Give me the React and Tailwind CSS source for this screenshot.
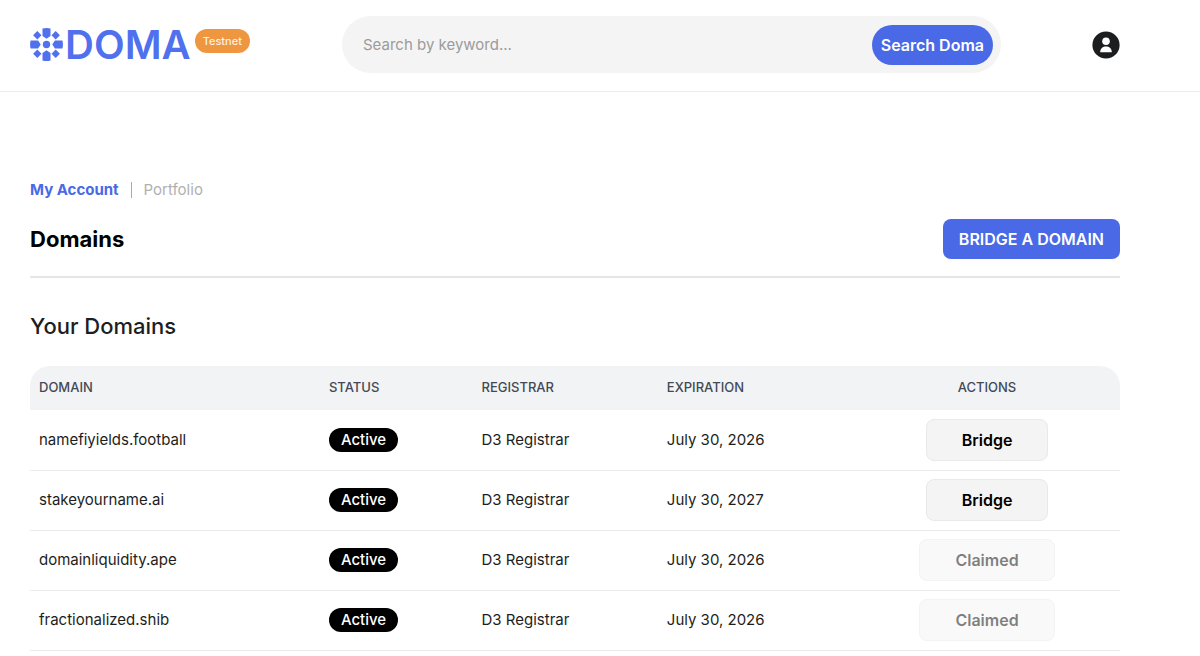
import { useState } from "react";

const domains = [
  { name: "namefiyields.football", registrar: "D3 Registrar", expiration: "July 30, 2026", claimed: false },
  { name: "stakeyourname.ai", registrar: "D3 Registrar", expiration: "July 30, 2027", claimed: false },
  { name: "domainliquidity.ape", registrar: "D3 Registrar", expiration: "July 30, 2026", claimed: true },
  { name: "fractionalized.shib", registrar: "D3 Registrar", expiration: "July 30, 2026", claimed: true },
];

function LogoMark() {
  return (
    <svg viewBox="0.5 0.5 33 33" className="w-[33px] h-[33px] shrink-0" fill="currentColor" aria-hidden="true">
      <circle cx="17" cy="17" r="3.7" />
      {[0, 90, 180, 270].map((angle) => (
        <g key={angle} transform={`rotate(${angle} 17 17)`}>
          {/* straight petal */}
          <path d="M13 1.1Q17 0.1 21 1.1V8.6L17 11.2L13 8.6Z" />
          {/* diagonal petal */}
          <path d="M26.2 3.6L30.4 7.8L26.2 12L22 7.8Z" />
        </g>
      ))}
    </svg>
  );
}

function AccountIcon() {
  return (
    <svg viewBox="0 0 28 28" className="w-7 h-7" aria-hidden="true">
      <circle cx="14" cy="14" r="13.6" fill="#1b1d1f" />
      <circle cx="14" cy="10.2" r="3.8" fill="#fff" />
      <path d="M8.2 21.2C8.2 17.4 10.8 15.4 14 15.4S19.8 17.4 19.8 21.2Z" fill="#fff" />
    </svg>
  );
}

function Header() {
  const [keyword, setKeyword] = useState("");

  return (
    <header className="flex items-center pt-4 pb-[18px] pl-[30px] pr-20 border-b border-[#ececec]">
      <div className="w-[312px] shrink-0 flex items-center">
        <a href="#" className="flex items-center gap-[2px] text-[#5170ee]">
          <LogoMark />
          <span className="text-[40px] leading-10 font-semibold">DOMA</span>
        </a>
        <span className="ml-1 mb-2 px-2 py-1 rounded-full bg-[#ef9640] text-[#fdf0e0] text-[11px] leading-4 font-medium">
          Testnet
        </span>
      </div>

      <form
        onSubmit={(e) => e.preventDefault()}
        className="flex-1 min-w-0 h-[57px] flex items-center rounded-full bg-[#f4f4f4] pl-[21px] pr-2"
      >
        <input
          type="text"
          aria-label="Search by keyword"
          placeholder="Search by keyword..."
          className="flex-1 min-w-0 h-10 bg-transparent text-[15px] outline-none placeholder:text-[#9b9b9b]"
          value={keyword}
          onChange={(e) => setKeyword(e.target.value)}
        />
        <button type="submit" className="h-10 px-[9px] rounded-full bg-[#4969e6] text-white text-base font-semibold">
          Search Doma
        </button>
      </form>

      <button type="button" aria-label="Account" className="ml-[91px] shrink-0">
        <AccountIcon />
      </button>
    </header>
  );
}

function DomainsTable() {
  return (
    <table className="w-full table-fixed text-left text-[15px] text-[#1c1e21]">
      <thead className="text-[13px] text-[#434955]">
        <tr className="h-11">
          <th className="w-[26.6%] px-[9px] font-medium bg-[#f2f3f5] rounded-tl-[20px]">DOMAIN</th>
          <th className="w-[14%] px-[9px] font-medium bg-[#f2f3f5]">STATUS</th>
          <th className="w-[17%] px-[9px] font-medium bg-[#f2f3f5]">REGISTRAR</th>
          <th className="w-[18%] px-[9px] font-medium bg-[#f2f3f5]">EXPIRATION</th>
          <th className="px-[9px] font-medium bg-[#f2f3f5] rounded-tr-[20px] text-center">ACTIONS</th>
        </tr>
      </thead>
      <tbody>
        {domains.map((domain) => (
          <tr key={domain.name} className="h-[60px] border-b border-[#ececec]">
            <td className="px-[9px]">{domain.name}</td>
            <td className="px-[9px]">
              <span className="inline-block px-3 rounded-full bg-black text-white leading-6 font-medium">Active</span>
            </td>
            <td className="px-[9px]">{domain.registrar}</td>
            <td className="px-[9px]">{domain.expiration}</td>
            <td className="px-[9px] text-center">
              <button
                type="button"
                disabled={domain.claimed}
                className="h-[42px] px-[35px] rounded-lg border border-[#e9e9e9] bg-[#f4f4f4] text-black text-base font-semibold disabled:opacity-50"
              >
                {domain.claimed ? "Claimed" : "Bridge"}
              </button>
            </td>
          </tr>
        ))}
      </tbody>
    </table>
  );
}

export default function App() {
  return (
    <div className="bg-white font-['Inter',sans-serif]">
      <Header />
      <main className="pt-[86px] pl-[30px] pr-20">
        <nav className="flex items-center gap-3 text-[15px] leading-6">
          <a href="#" className="font-bold text-[#4969e6]">My Account</a>
          <span className="w-px h-4 bg-[#a9a9a9]" />
          <a href="#" className="text-[#b0b0b0]">Portfolio</a>
        </nav>

        <div className="mt-[17px] pb-[17px] flex items-center justify-between border-b-2 border-[#e6e6e6]">
          <h1 className="text-[22px] font-bold text-black">Domains</h1>
          <button type="button" className="h-10 px-4 rounded-lg bg-[#4969e6] text-white text-base font-semibold">
            BRIDGE A DOMAIN
          </button>
        </div>

        <h2 className="mt-8 mb-6 text-[22px] leading-8 font-medium text-[#1c1e21]">Your Domains</h2>
        <DomainsTable />
      </main>
    </div>
  );
}
